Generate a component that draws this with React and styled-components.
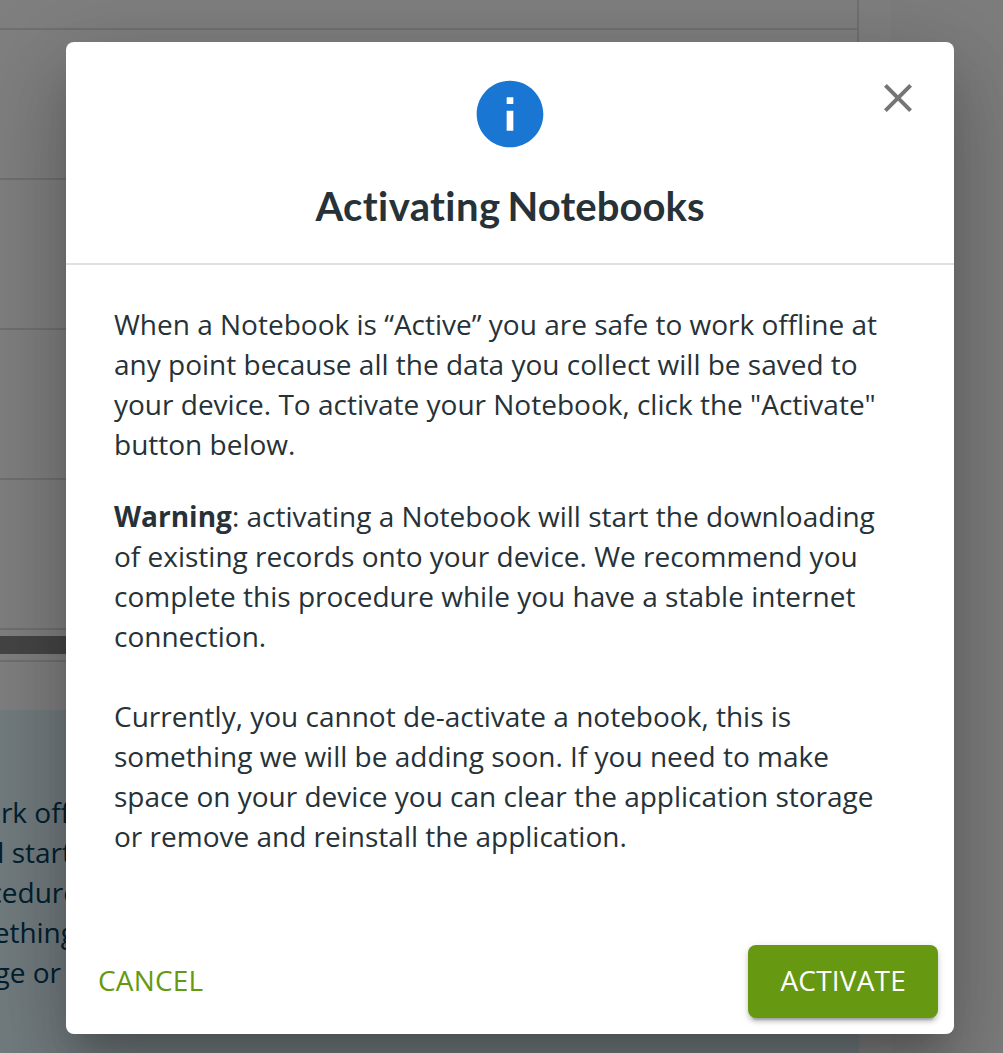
import React from "react";
import styled, { createGlobalStyle } from "styled-components";

const Global = createGlobalStyle`
  *, *::before, *::after { box-sizing: border-box; }
  body { margin: 0; background: #fff; overflow: hidden; }
  button { border: 0; background: none; padding: 0; margin: 0; cursor: pointer; }
`;

const Screen = styled.div`
  position: relative;
  width: 1003px;
  height: 1053px;
  overflow: hidden;
  font-family: "Open Sans", sans-serif;
  font-size: 28px;
  line-height: 40px;
`;

const Page = styled.div`
  display: flex;
  height: 1053px;
  background: #fafafa;
`;

const Content = styled.main`
  width: 891px;
  background: #fff;
`;

const Grid = styled.section`
  width: 859px;
  height: 662px;
  border-right: 2px solid #e0e0e0;
  border-bottom: 2px solid #e0e0e0;
`;

const GridRow = styled.div`
  height: ${(p) => p.$height}px;
  border-bottom: 2px solid #e0e0e0;
`;

const Scrollbar = styled.div`
  height: 18px;
  margin-top: 6px;
  background: #8a8a8a;
`;

const Notice = styled.section`
  width: 859px;
  height: 360px;
  margin-top: 48px;
  padding-top: 82px;
  background: #e5f6fd;
  color: #014361;
`;

const NoticeLine = styled.div`
  display: flex;
  justify-content: flex-end;
  width: ${(p) => p.$width}px;
  white-space: nowrap;
`;

const Backdrop = styled.div`
  position: absolute;
  inset: 0;
  display: flex;
  padding: 42px 49px 19px 66px;
  background: rgba(0, 0, 0, 0.5);
`;

const Dialog = styled.div`
  position: relative;
  display: flex;
  flex-direction: column;
  width: 888px;
  height: 992px;
  border-radius: 8px;
  background: #fff;
  color: #263238;
  box-shadow:
    0 22px 30px -14px rgba(0, 0, 0, 0.2),
    0 48px 76px 6px rgba(0, 0, 0, 0.14),
    0 18px 92px 16px rgba(0, 0, 0, 0.12);
`;

const Header = styled.header`
  display: flex;
  flex-direction: column;
  align-items: center;
  height: 223px;
  padding-top: 32px;
  border-bottom: 2px solid #e0e0e0;
`;

const InfoIcon = styled.svg`
  width: 80px;
  height: 80px;
  fill: #1976d2;
`;

const Title = styled.h2`
  margin: 26px 0 0;
  font: 700 40px/52px Lato, sans-serif;
  font-variant-ligatures: none;
  letter-spacing: 0.05px;
  word-spacing: -2.6px;
`;

const TitleLead = styled.span`
  letter-spacing: 0.4px;
`;

const CloseButton = styled.button`
  position: absolute;
  top: 32px;
  right: 32px;
  width: 48px;
  height: 48px;
  svg { display: block; width: 48px; height: 48px; fill: #757575; }
`;

const Body = styled.div`
  flex: 1;
  padding: 39px 48px 0;
`;

const Paragraph = styled.p`
  margin: 0 0 ${(p) => p.$gap || 0}px;
  white-space: nowrap;
`;

const Actions = styled.footer`
  display: flex;
  align-items: center;
  justify-content: space-between;
  padding: 16px;
`;

const Button = styled.button`
  height: 73px;
  padding: 0 ${(p) => (p.$filled ? 32 : 16)}px 2px;
  border-radius: 8px;
  font: 400 28px/49px "Open Sans", sans-serif;
  letter-spacing: 0.2px;
  color: ${(p) => (p.$filled ? "#fff" : "#669911")};
  background: ${(p) => (p.$filled ? "#669911" : "transparent")};
  box-shadow: ${(p) =>
    p.$filled
      ? "0 6px 2px -4px rgba(0,0,0,.2), 0 4px 4px rgba(0,0,0,.14), 0 2px 10px rgba(0,0,0,.12)"
      : "none"};
`;

const noticeLines = [
  ["rk off", 70],
  ["l start", 72],
  ["cedure", 79],
  ["ething", 76],
  ["ge or", 61],
];

export default function App() {
  return (
    <Screen>
      <Global />
      <Page>
        <Content>
          <Grid>
            <GridRow $height={30} />
            <GridRow $height={150} />
            <GridRow $height={150} />
            <GridRow $height={150} />
            <GridRow $height={150} />
            <Scrollbar />
          </Grid>
          <Notice>
            {noticeLines.map(([text, width]) => (
              <NoticeLine key={text} $width={width}>{text}</NoticeLine>
            ))}
          </Notice>
        </Content>
      </Page>
      <Backdrop>
        <Dialog role="dialog" aria-labelledby="dialog-title">
          <Header>
            <InfoIcon viewBox="0 0 24 24">
              <path d="M12 2C6.48 2 2 6.48 2 12s4.48 10 10 10 10-4.48 10-10S17.52 2 12 2zm1 15h-2v-6h2v6zm0-8h-2V7h2v2z" />
            </InfoIcon>
            <Title id="dialog-title"><TitleLead>Activating</TitleLead> Notebooks</Title>
          </Header>
          <CloseButton aria-label="Close">
            <svg viewBox="0 0 24 24">
              <path d="M19 6.41L17.59 5 12 10.59 6.41 5 5 6.41 10.59 12 5 17.59 6.41 19 12 13.41 17.59 19 19 17.59 13.41 12z" />
            </svg>
          </CloseButton>
          <Body>
            <Paragraph $gap={32}>
              When a Notebook is “Active” you are safe to work offline at<br />
              any point because all the data you collect will be saved to<br />
              your device. To activate your Notebook, click the "Activate"<br />
              button below.
            </Paragraph>
            <Paragraph $gap={40}>
              <strong>Warning</strong>: activating a Notebook will start the downloading<br />
              of existing records onto your device. We recommend you<br />
              complete this procedure while you have a stable internet<br />
              connection.
            </Paragraph>
            <Paragraph>
              Currently, you cannot de-activate a notebook, this is<br />
              something we will be adding soon. If you need to make<br />
              space on your device you can clear the application storage<br />
              or remove and reinstall the application.
            </Paragraph>
          </Body>
          <Actions>
            <Button>CANCEL</Button>
            <Button $filled>ACTIVATE</Button>
          </Actions>
        </Dialog>
      </Backdrop>
    </Screen>
  );
}
